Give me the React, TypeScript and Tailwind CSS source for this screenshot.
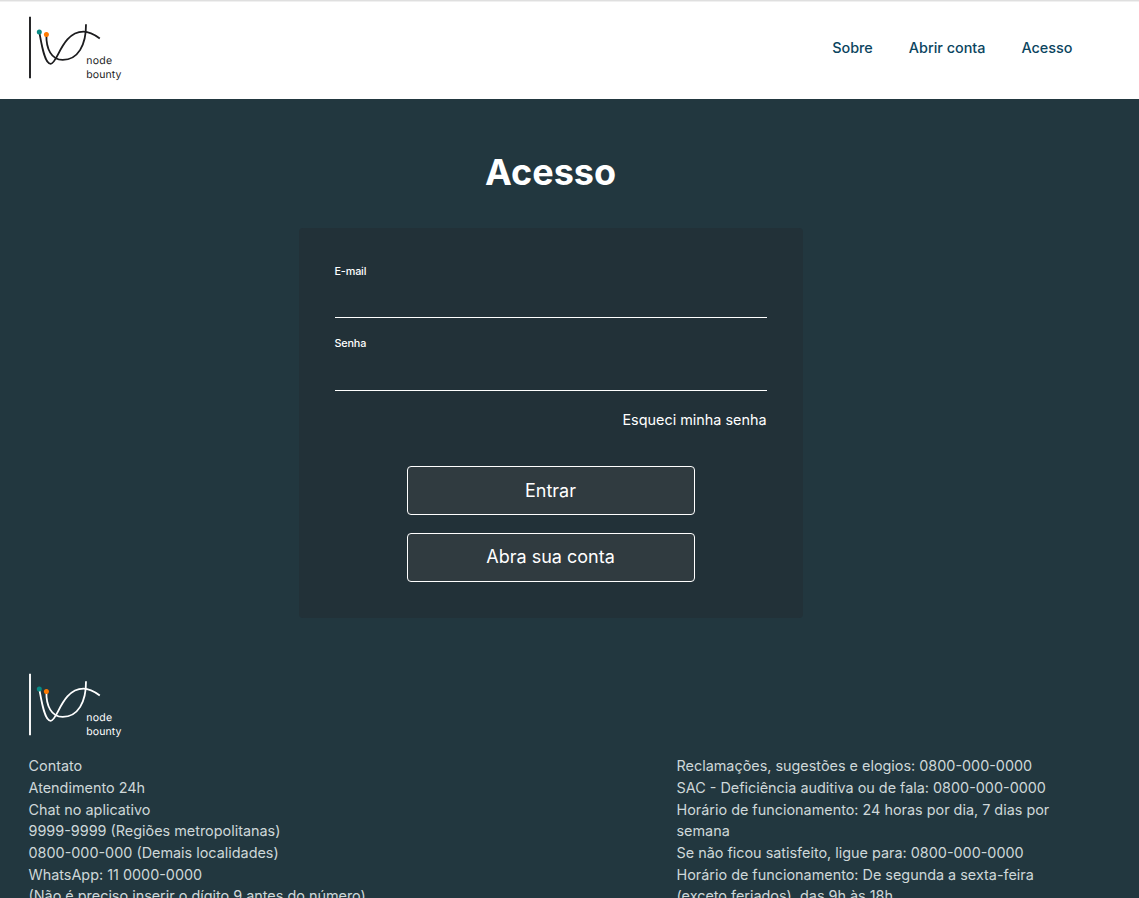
const CONTACT_LINES = [
  'Contato',
  'Atendimento 24h',
  'Chat no aplicativo',
  '9999-9999 (Regiões metropolitanas)',
  '0800-000-000 (Demais localidades)',
  'WhatsApp: 11 0000-0000',
  '(Não é preciso inserir o dígito 9 antes do número)',
];

const SUPPORT_LINES = [
  'Reclamações, sugestões e elogios: 0800-000-0000',
  'SAC - Deficiência auditiva ou de fala: 0800-000-0000',
  'Horário de funcionamento: 24 horas por dia, 7 dias por semana',
  'Se não ficou satisfeito, ligue para: 0800-000-0000',
  'Horário de funcionamento: De segunda a sexta-feira (exceto feriados), das 9h às 18h.',
];

function Logo({ className }: { className: string }) {
  return (
    <svg viewBox="0 0 96 68" width="96" height="68" className={className} role="img" aria-label="node bounty">
      <g fill="none" stroke="currentColor" strokeWidth="1.8">
        <path d="M2 1.700V63.200" strokeWidth="1.900" />
        <path d="M11.300 17C13.500 29 16.500 48.800 22.700 48.800C29.500 48.800 34 16.700 55.500 16.700C62 16.700 67 20 71.800 23.500" />
        <path d="M18.400 19.500C18 34 23.500 44.900 34.700 44.900C50 44.900 58.200 30 58 9.300" />
      </g>
      <circle cx="11.300" cy="17" r="2.500" fill="#078a84" />
      <circle cx="18.400" cy="19.500" r="2.500" fill="#ff7a00" />
      <g
        fill="currentColor"
        fontFamily="Inter, sans-serif"
        fontSize="10.5"
        fontWeight="400"
        textRendering="geometricPrecision"
      >
        <text x="58.200" y="49.400" textLength="25.800">node</text>
        <text x="58.200" y="62.900" textLength="35.300">bounty</text>
      </g>
    </svg>
  );
}

function Field({ id, label, type }: { id: string; label: string; type: string }) {
  return (
    <div className="flex h-[72.500px] flex-col">
      <label htmlFor={id} className="h-4 pt-[0.750px] text-[10.800px] leading-[15px] font-medium tracking-[-0.15px]">
        {label}
      </label>
      <input id={id} type={type} className="h-[39px] w-full border-b border-white bg-transparent text-sm outline-none" />
    </div>
  );
}

function InfoColumn({ lines }: { lines: string[] }) {
  return (
    <div className="w-[396px]">
      {lines.map((line) => (
        <p key={line}>{line}</p>
      ))}
    </div>
  );
}

export default function App() {
  return (
    <div className="flex h-screen flex-col overflow-hidden bg-[#22373f] font-['Inter',sans-serif] text-[14.400px]">
      <header className="flex h-[99px] shrink-0 items-start justify-between border-t border-[#dfdfdf] bg-white pr-[66.500px] pl-7 shadow-[inset_0_1px_0_#f0f0f0]">
        <Logo className="mt-[14px] text-[#1c1c1e]" />
        <nav className="mt-9 flex gap-9 leading-[22px] font-medium text-[#0b4560]">
          <a href="#sobre">Sobre</a>
          <a href="#abrir">Abrir conta</a>
          <a href="#acesso">Acesso</a>
        </nav>
      </header>

      <main className="flex h-[559px] shrink-0 flex-col items-center pr-[38px] text-white">
        <h1 className="mt-[46px] text-[36px] leading-[54px] font-bold">Acesso</h1>
        <form className="mt-[29px] h-[390px] w-[504px] rounded bg-[#223138] px-9 pt-[35px]">
          <Field id="email" label="E-mail" type="email" />
          <Field id="senha" label="Senha" type="password" />
          <div className="flex justify-end pt-px leading-[22px]">
            <a href="#senha">Esqueci minha senha</a>
          </div>
          <div className="mt-[35px] flex flex-col items-center gap-[18px] text-[18px]">
            <button type="button" className="h-[49px] w-72 rounded-[4px] border border-white bg-[#303b40]">
              Entrar
            </button>
            <button type="button" className="h-[49px] w-72 rounded-[4px] border border-white bg-[#303b40] pb-0.5">
              Abra sua conta
            </button>
          </div>
        </form>
      </main>

      <footer className="shrink-0 pl-[28.500px] text-[#ced7d9]">
        <Logo className="mt-[13.500px] -ml-[0.500px] text-white" />
        <div className="mt-[15.650px] grid grid-cols-[648px_396px] leading-[21.700px]">
          <InfoColumn lines={CONTACT_LINES} />
          <InfoColumn lines={SUPPORT_LINES} />
        </div>
      </footer>
    </div>
  );
}
